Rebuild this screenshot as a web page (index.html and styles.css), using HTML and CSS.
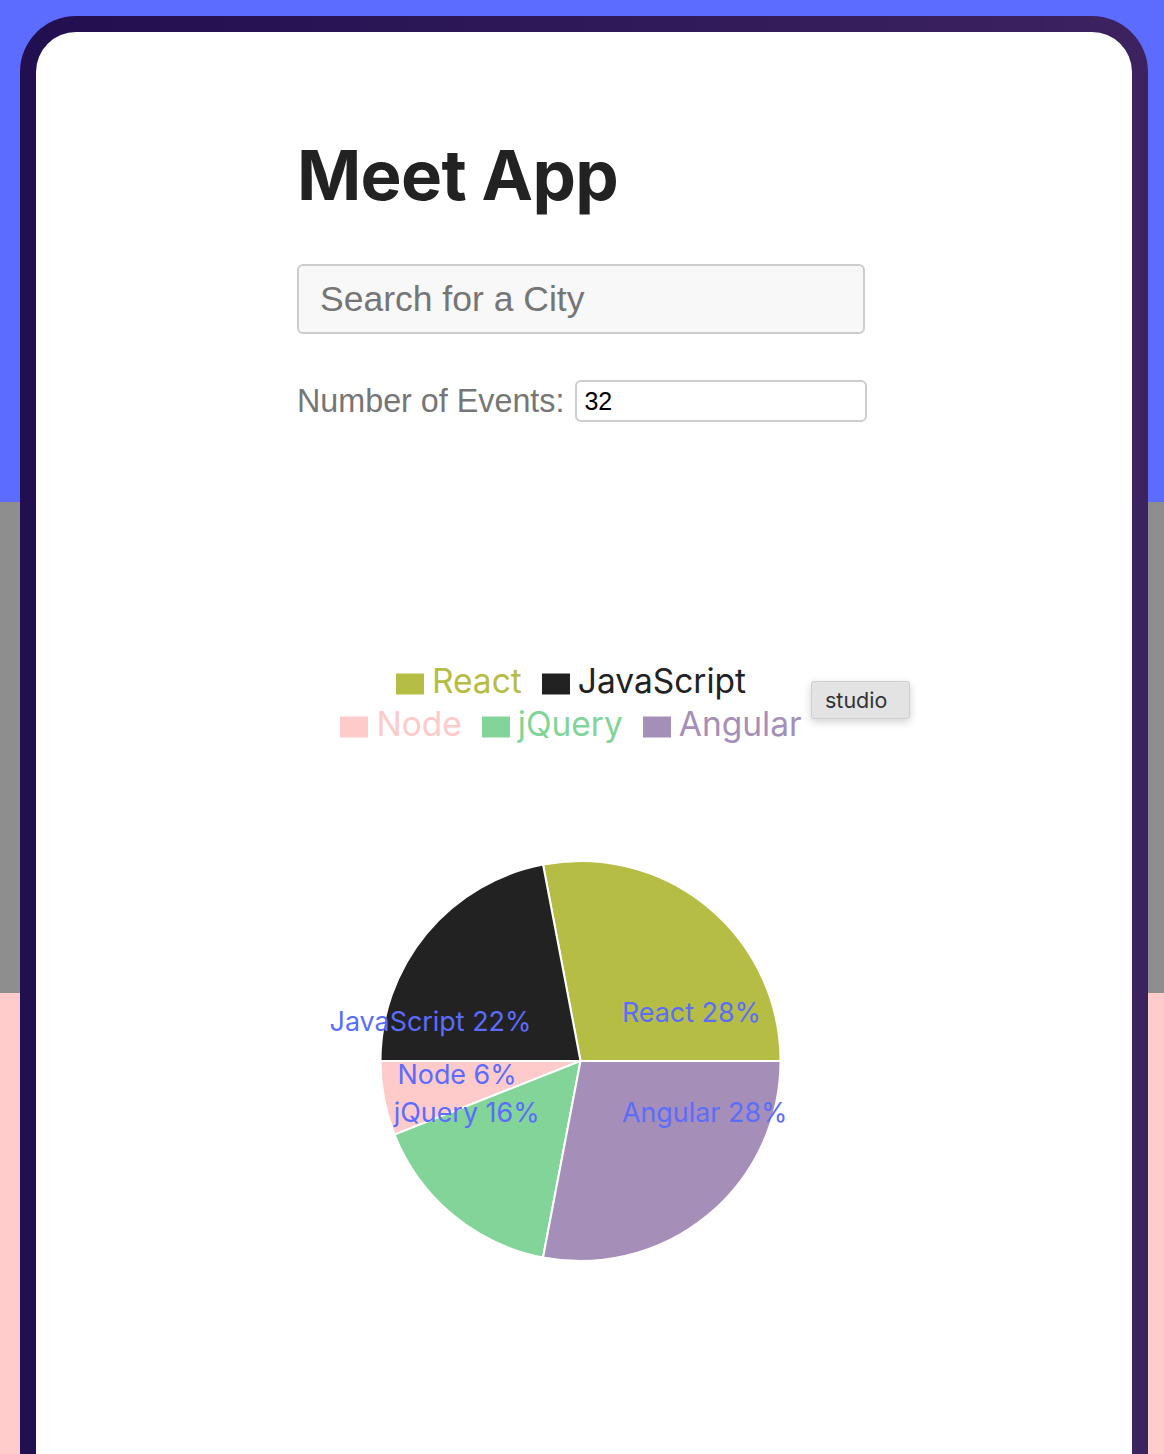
FILE: index.html
```html
<!DOCTYPE html>
<html lang="en">
<head>
<meta charset="utf-8">
<title>Meet App</title>
<link rel="stylesheet" href="styles.css">
</head>
<body>
<div class="frame">
  <div class="card">
    <main class="content">
      <h1 class="title">Meet App</h1>
      <input class="city-search" type="text" placeholder="Search for a City">
      <div class="events-row">
        <label class="events-label" for="events">Number of Events:</label>
        <input id="events" class="events-input" type="text" value="32">
      </div>
      <div class="chart">
        <div class="legend">
          <ul class="legend-row">
            <li class="legend-item react"><svg class="legend-icon" viewBox="0 0 32 32"><path d="M0,4h32v24h-32z"/></svg><span>React</span></li>
            <li class="legend-item js"><svg class="legend-icon" viewBox="0 0 32 32"><path d="M0,4h32v24h-32z"/></svg><span>JavaScript</span></li>
          </ul>
          <ul class="legend-row">
            <li class="legend-item node"><svg class="legend-icon" viewBox="0 0 32 32"><path d="M0,4h32v24h-32z"/></svg><span>Node</span></li>
            <li class="legend-item jquery"><svg class="legend-icon" viewBox="0 0 32 32"><path d="M0,4h32v24h-32z"/></svg><span>jQuery</span></li>
            <li class="legend-item angular"><svg class="legend-icon" viewBox="0 0 32 32"><path d="M0,4h32v24h-32z"/></svg><span>Angular</span></li>
          </ul>
        </div>
        <svg class="pie" width="568" height="400" viewBox="0 0 568 400">
          <g class="sectors">
            <path class="s-react" d="M283.5,200 L483.5,200 A200,200 0 0 0 246.02,3.54 Z"/>
            <path class="s-js" d="M283.5,200 L246.02,3.54 A200,200 0 0 0 83.5,200 Z"/>
            <path class="s-node" d="M283.5,200 L83.5,200 A200,200 0 0 0 97.54,273.62 Z"/>
            <path class="s-jquery" d="M283.5,200 L97.54,273.62 A200,200 0 0 0 246.02,396.46 Z"/>
            <path class="s-angular" d="M283.5,200 L246.02,396.46 A200,200 0 0 0 483.5,200 Z"/>
          </g>
          <g class="labels">
            <text x="324.9" y="150.9" text-anchor="start" dominant-baseline="central">React 28%</text>
            <text x="234.4" y="159.6" text-anchor="end" dominant-baseline="central">JavaScript 22%</text>
            <text x="219.7" y="213.2" text-anchor="end" dominant-baseline="central">Node 6%</text>
            <text x="242.6" y="251.1" text-anchor="end" dominant-baseline="central">jQuery 16%</text>
            <text x="324.9" y="251.1" text-anchor="start" dominant-baseline="central">Angular 28%</text>
          </g>
        </svg>
      </div>
    </main>
  </div>
</div>
<div class="tooltip">studio</div>
</body>
</html>
```

FILE: styles.css
```css
html, body {
  margin: 0;
  padding: 0;
}
body {
  height: 1454px;
  overflow: hidden;
  position: relative;
  background: linear-gradient(to bottom, #5b6cff 0, #5b6cff 502px, #8e8e8e 502px, #8e8e8e 993px, #ffcbcb 993px);
  font-family: Inter, "Noto Sans", sans-serif;
}
.frame {
  margin: 16px 16px 0 20px;
  padding: 16px 16px 0 16px;
  border-radius: 56px 56px 0 0;
  background: linear-gradient(90deg, #210f50, #3d2260);
  min-height: 1500px;
  box-sizing: border-box;
}
.card {
  background: #fff;
  border-radius: 40px 40px 0 0;
  min-height: 1500px;
  padding-top: 108px;
  box-sizing: border-box;
}
.content {
  width: 574px;
  margin: 0 auto;
}
.title {
  margin: 0;
  font-family: Inter, sans-serif;
  font-weight: 700;
  font-size: 69px;
  line-height: 70px;
  color: #222;
  letter-spacing: -0.7px;
}
.city-search {
  display: block;
  box-sizing: border-box;
  width: 568px;
  height: 70px;
  margin: 54px 0 0 0;
  padding: 0 21px;
  border: 2px solid #cdcdcd;
  border-radius: 6px;
  background: #f8f8f8;
  font-family: "Liberation Sans", Arial, sans-serif;
  font-size: 35.5px;
  color: #222;
  outline: none;
}
.city-search::placeholder {
  color: #757575;
}
.events-row {
  display: flex;
  align-items: center;
  gap: 11px;
  margin-top: 46px;
  height: 42px;
}
.events-label {
  font-family: "Liberation Sans", Arial, sans-serif;
  font-size: 32.3px;
  color: #767676;
}
.events-input {
  box-sizing: border-box;
  width: 292px;
  height: 42px;
  margin: 0;
  padding: 0 7px;
  border: 2px solid #cdcdcd;
  border-radius: 6px;
  background: #fff;
  font-family: "Liberation Sans", Arial, sans-serif;
  font-size: 25px;
  color: #000;
  outline: none;
}
.chart {
  width: 568px;
  margin-top: 238px;
}
.legend-row {
  display: flex;
  justify-content: center;
  list-style: none;
  margin: 0;
  padding: 0;
  height: 43px;
}
.legend-item {
  display: flex;
  align-items: center;
  margin-right: 20px;
  font-size: 33.5px;
  line-height: 43px;
}
.legend-icon {
  width: 28px;
  height: 28px;
  margin-right: 8px;
  position: relative;
  top: 2px;
}
.react { color: #b5bd45; fill: #b5bd45; }
.js { color: #222222; fill: #222222; }
.node { color: #ffcaca; fill: #ffcaca; }
.jquery { color: #82d499; fill: #82d499; }
.angular { color: #a58fb8; fill: #a58fb8; }
.pie {
  display: block;
  margin-top: 115px;
  overflow: visible;
}
.sectors path {
  stroke: #fff;
  stroke-width: 2;
}
.s-react { fill: #b5bd45; }
.s-js { fill: #222222; }
.s-node { fill: #ffcaca; }
.s-jquery { fill: #82d499; }
.s-angular { fill: #a58fb8; }
.labels text {
  font-family: Inter, sans-serif;
  font-size: 26.9px;
  fill: #5b6cff;
}
.tooltip {
  position: absolute;
  left: 811px;
  top: 681px;
  width: 99px;
  height: 38px;
  box-sizing: border-box;
  padding-left: 13px;
  background: #e3e3e3;
  border: 1px solid #cfcfcf;
  border-radius: 3px;
  box-shadow: 0 3px 9px rgba(0, 0, 0, 0.18);
  font-family: Inter, sans-serif;
  font-size: 21.5px;
  line-height: 36px;
  color: #333;
}
```
